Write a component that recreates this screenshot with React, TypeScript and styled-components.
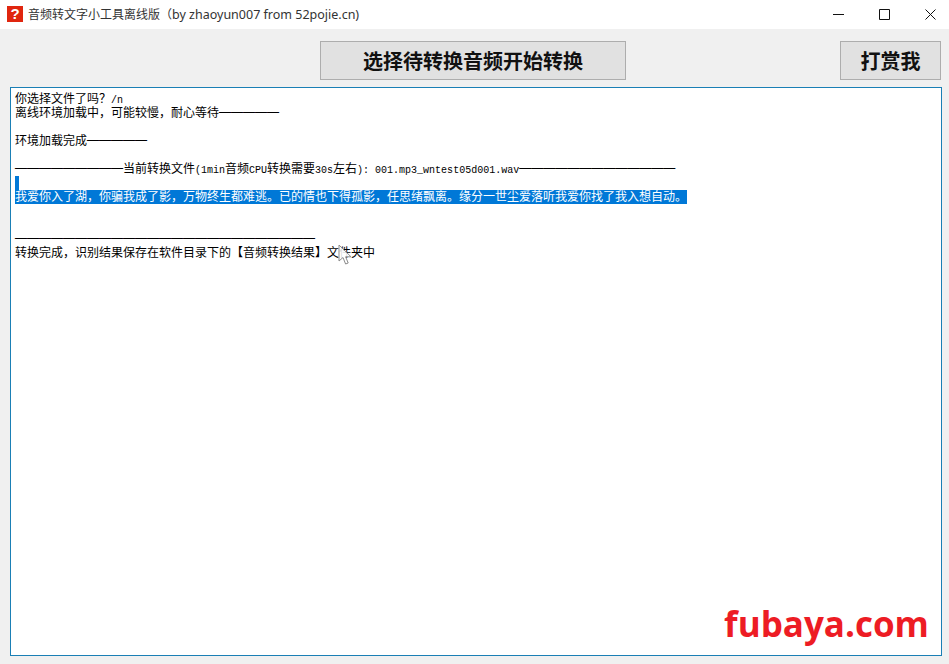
import { styled, createGlobalStyle } from 'styled-components'

const GlobalStyle = createGlobalStyle`
  html, body {
    margin: 0;
    padding: 0;
    background: #f0f0f0;
  }
`

const cjk = '"Noto Sans CJK SC", sans-serif'

const Dashes = ({ count }: { count: number }) => <DashRun>{'—'.repeat(count)}</DashRun>

const App = () => {
  return (
    <Window lang="zh-CN">
      <GlobalStyle />
      <TitleBar>
        <AppIcon>?</AppIcon>
        <Title>音频转文字小工具离线版（<TitleLatin>by zhaoyun007 from 52pojie.cn)</TitleLatin></Title>
        <WindowControls>
          <svg width="11" height="11" viewBox="0 0 11 11"><path d="M0 5.5h11" stroke="#111" fill="none" /></svg>
          <svg width="11" height="11" viewBox="0 0 11 11"><path d="M.5.5h10v10H.5z" stroke="#111" fill="none" /></svg>
          <svg width="11" height="11" viewBox="0 0 11 11"><path d="M.5.5l10 10M10.5.5l-10 10" stroke="#111" fill="none" /></svg>
        </WindowControls>
      </TitleBar>

      <Toolbar>
        <ActionButton $width={306}>选择待转换音频开始转换</ActionButton>
        <ActionButton $width={101}>打赏我</ActionButton>
      </Toolbar>

      <OutputPanel>
        <Line>你选择文件了吗？<Latin>/n</Latin></Line>
        <Line>离线环境加载中，可能较慢，耐心等待<Dashes count={5} /></Line>
        <Line />
        <Line>环境加载完成<Dashes count={5} /></Line>
        <Line />
        <Line>
          <Dashes count={9} />当前转换文件<Latin>(1min</Latin>音频<Latin>CPU</Latin>转换需要<Latin>30s</Latin>左右<Latin>): 001.mp3_wntest05d001.wav</Latin><Dashes count={13} />
        </Line>
        <Line><Selected>&nbsp;</Selected></Line>
        <Line><Selected>我爱你入了湖，你骗我成了影，万物终生都难逃。已的情也下得孤影，任思绪飘离。缘分一世尘爱落听我爱你找了我入想自动。</Selected></Line>
        <Line />
        <Line />
        <Line><Dashes count={25} /></Line>
        <Line>转换完成，识别结果保存在软件目录下的【音频转换结果】文件夹中</Line>

        <Pointer width="14" height="22" viewBox="0 0 14 22">
          <path d="M1 1v16l4-3.5 2.6 6.5 2.6-1-2.6-6.2H13z" fill="#fff" fillOpacity="0.85" stroke="#8a8a8a" strokeWidth="1" />
        </Pointer>
        <Watermark>fubaya.com</Watermark>
      </OutputPanel>
    </Window>
  )
}

const Window = styled.div`
  width: 949px;
  height: 664px;
  overflow: hidden;
  display: flex;
  flex-direction: column;
  background: #f0f0f0;
  font-family: ${cjk};
`

const TitleBar = styled.div`
  height: 29px;
  flex-shrink: 0;
  display: flex;
  align-items: center;
  padding: 0 13px 1px 7px;
  box-sizing: border-box;
  background: #fff;
`

const AppIcon = styled.div`
  width: 16px;
  height: 16px;
  margin-right: 5px;
  display: flex;
  align-items: center;
  justify-content: center;
  background: #e0260f;
  color: #fff;
  font: 700 15px/16px "Liberation Sans", sans-serif;
`

const Title = styled.div`
  font-size: 12px;
  line-height: 16px;
  color: #333;
  white-space: pre;
`

const TitleLatin = styled.span`
  font-family: "Noto Sans", sans-serif;
  font-size: 12.5px;
`

const WindowControls = styled.div`
  margin-left: auto;
  display: flex;
  align-items: center;
  gap: 35px;

  svg {
    display: block;
  }
`

const Toolbar = styled.div`
  height: 58px;
  flex-shrink: 0;
  display: flex;
  justify-content: space-between;
  padding: 12px 8px 7px 320px;
  box-sizing: border-box;
`

const ActionButton = styled.button<{ $width: number }>`
  width: ${(p) => p.$width}px;
  height: 39px;
  padding: 0;
  border: 1px solid #adadad;
  border-radius: 0;
  background: #e1e1e1;
  color: #111;
  font-family: ${cjk};
  font-size: 20px;
  font-weight: 700;
  line-height: 1;
`

const OutputPanel = styled.div`
  position: relative;
  flex: 1;
  margin: 0 7px 8px 10px;
  padding: 4px 4px 0;
  border: 1px solid #1a7fb5;
  background: #fff;
`

const Line = styled.div`
  height: 14px;
  font-size: 12px;
  line-height: 12px;
  color: #000;
  white-space: pre;
`

const Latin = styled.span`
  font-family: "Liberation Mono", monospace;
  font-size: 10px;
  line-height: 0;
`

const DashRun = styled.span`
  font-family: "Liberation Serif", serif;
  font-weight: 700;
  line-height: 0;
  vertical-align: 2px;
`

const Selected = styled.span`
  display: inline-block;
  vertical-align: top;
  min-width: 4px;
  height: 14px;
  background: #0078d7;
  color: #fff;
`

const Pointer = styled.svg`
  position: absolute;
  left: 327px;
  top: 156px;
`

const Watermark = styled.div`
  position: absolute;
  right: 12px;
  bottom: 9px;
  color: #ed1c24;
  font: 700 35px/44px "Open Sans", sans-serif;
`

export default App
